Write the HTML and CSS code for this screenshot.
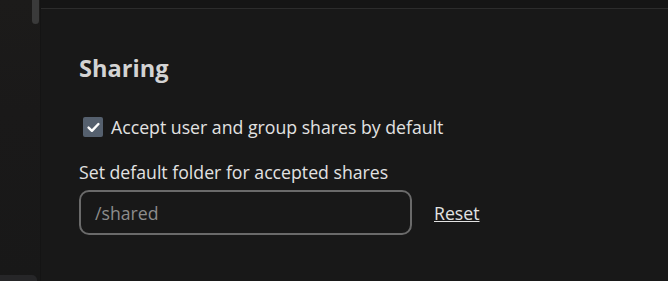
FILE: index.html
```html
<!DOCTYPE html>
<html>
<head>
<meta charset="utf-8">
<link rel="stylesheet" href="styles.css">
</head>
<body>
<div class="app">
  <aside class="sidebar">
    <div class="scrollbar"></div>
    <div class="sidebar-foot"></div>
  </aside>
  <main class="main">
    <div class="topbar"></div>
    <section class="section">
      <h2 class="title">Sharing</h2>
      <label class="check-row">
        <span class="checkbox">
          <svg width="13" height="11" viewBox="0 0 13 11"><path d="M1.6 5.6 L4.9 8.8 L11.4 2" fill="none" stroke="#ffffff" stroke-width="2.4" stroke-linecap="round" stroke-linejoin="round"/></svg>
        </span>
        <span class="check-label">Accept user and group shares by default</span>
      </label>
      <div class="field-label">Set default folder for accepted shares</div>
      <div class="field-row">
        <div class="input"><span class="placeholder">/shared</span></div>
        <a class="reset">Reset</a>
      </div>
    </section>
  </main>
</div>
</body>
</html>
```

FILE: styles.css
```css
html, body {
  margin: 0;
  padding: 0;
  background: #181818;
  height: 100%;
  overflow: hidden;
}
body {
  font-family: "Open Sans", "Noto Sans", sans-serif;
  color: #e2e2e2;
}
.app {
  display: flex;
  height: 281px;
}
.sidebar {
  width: 41px;
  flex: none;
  position: relative;
  background: linear-gradient(180deg, #1c1b1a 0%, #1a1919 40%, #181818 100%);
  border-right: 1px solid #141414;
  box-sizing: border-box;
}
.scrollbar {
  position: absolute;
  left: 32px;
  top: 0;
  width: 7px;
  height: 24px;
  border-radius: 0 0 4px 4px;
  background: #3a3a3a;
}
.sidebar-foot {
  position: absolute;
  left: 0;
  bottom: 0;
  width: 37px;
  height: 6px;
  border-radius: 0 5px 0 0;
  background: #262628;
}
.main {
  flex: 1;
  display: flex;
  flex-direction: column;
}
.topbar {
  height: 8px;
  background: #151515;
  border-bottom: 1px solid #2c2c2c;
}
.section {
  padding: 45px 0 0 38px;
}
.title {
  margin: 0;
  font-size: 23.6px;
  font-weight: 700;
  color: #d3d3d3;
  line-height: 28px;
}
.check-row {
  display: flex;
  align-items: center;
  gap: 8px;
  margin: 33px 0 0 4px;
  height: 24px;
}
.checkbox {
  width: 20px;
  height: 20px;
  border-radius: 2px;
  background: #55606e;
  display: flex;
  align-items: center;
  justify-content: center;
}
.check-label {
  font-size: 17.7px;
  line-height: 24px;
}
.field-label {
  margin-top: 21px;
  font-size: 17.7px;
  line-height: 24px;
}
.field-row {
  display: flex;
  align-items: center;
  gap: 22px;
  margin-top: 6px;
}
.input {
  width: 333px;
  height: 45px;
  box-sizing: border-box;
  border: 2px solid #6a6a6a;
  border-radius: 10px;
  display: flex;
  align-items: center;
  padding-left: 14px;
}
.placeholder {
  font-size: 17.7px;
  color: #8c8c8c;
}
.reset {
  font-size: 17.7px;
  color: #e2e2e2;
  text-decoration: underline;
}
```
